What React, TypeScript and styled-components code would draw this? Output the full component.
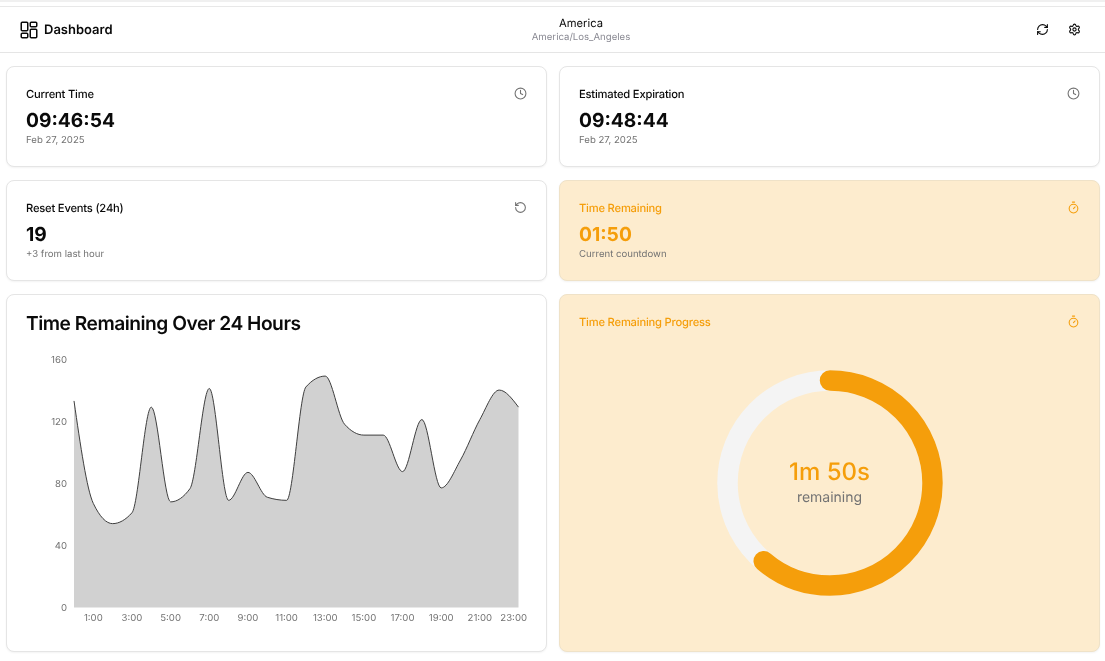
import React from "react";
import styled, { createGlobalStyle } from "styled-components";
import { Clock, RefreshCw, Settings, RotateCcw, Timer } from "lucide-react";

const Global = createGlobalStyle`
  html, body { margin: 0; padding: 0; background: #fff; }
  body {
    font-family: Inter, "Liberation Sans", sans-serif;
    color: #0a0a0a;
    text-rendering: geometricPrecision;
  }
  * { box-sizing: border-box; }
`;

const Page = styled.div`
  width: 1105px;
  height: 661px;
  overflow: hidden;
  background: #fff;
  border-top: 2px solid #f0f0f0;
  padding-top: 4px;
  will-change: transform;
`;

const Header = styled.header`
  height: 47px;
  border-top: 1px solid #e8e8e8;
  border-bottom: 1px solid #e5e5e5;
  display: grid;
  grid-template-columns: 511px 100px 1fr;
  align-items: center;
  padding: 0 20px;
`;

const Brand = styled.div`
  display: flex;
  align-items: center;
  gap: 6px;
`;

const BrandName = styled.span`
  font-size: 13px;
  font-weight: 600;
  margin-top: 1px;
`;

const Zone = styled.div`
  display: flex;
  flex-direction: column;
  align-items: center;
  white-space: nowrap;
`;

const ZoneName = styled.div`
  font-size: 11.2px;
  line-height: 15px;
`;

const ZoneId = styled.div`
  font-size: 9.6px;
  line-height: 13px;
  color: #8a8a93;
`;

const Actions = styled.div`
  display: flex;
  justify-content: flex-end;
  gap: 19px;
  padding-right: 4px;
  color: #0a0a0a;
`;

const Content = styled.main`
  display: grid;
  grid-template-columns: 541px 541px;
  grid-template-rows: 101px 101px 358px;
  gap: 13px 12px;
  padding: 13px 5px 0 6px;
`;

const Card = styled.section<{ $warn?: boolean }>`
  position: relative;
  border-radius: 8px;
  border: 1px solid ${p => (p.$warn ? "#efe2c8" : "#e5e5e5")};
  background: ${p => (p.$warn ? "#fdecce" : "#fff")};
  box-shadow: 0 1px 2px rgba(0, 0, 0, 0.05);
  color: ${p => (p.$warn ? "#f59e0b" : "#0a0a0a")};
  padding: 19px 19px 0;
  display: flex;
  flex-direction: column;
`;

const CardTop = styled.div`
  display: flex;
  align-items: flex-start;
  justify-content: space-between;
  height: 16px;
`;

const Label = styled.div`
  font-size: 11.2px;
  font-weight: 500;
  line-height: 16px;
  letter-spacing: -0.2px;
`;

const Side = styled.span<{ $warn?: boolean }>`
  display: flex;
  color: ${p => (p.$warn ? "#f59e0b" : "#737373")};
  margin-top: 1px;
`;

const Value = styled.div`
  font-size: 19.2px;
  font-weight: 700;
  line-height: 26px;
  margin-top: 5px;
`;

const Hint = styled.div`
  font-size: 9.6px;
  line-height: 14px;
  color: #737373;
  margin-top: 1px;
`;

const ChartCard = styled(Card)`
  padding: 16px 19px 0;
`;

const ChartTitle = styled.h2`
  margin: 0;
  font-size: 19.2px;
  font-weight: 600;
  line-height: 24px;
  letter-spacing: -0.48px;
`;

const RingWrap = styled.div`
  align-self: center;
  margin-top: 40px;
  position: relative;
  width: 226px;
  height: 226px;
`;

const RingText = styled.div`
  position: absolute;
  inset: 0;
  display: flex;
  flex-direction: column;
  align-items: center;
  justify-content: center;
`;

const RingValue = styled.div`
  font-size: 24px;
  font-weight: 500;
  line-height: 28px;
  color: #f59e0b;
  margin: -1px 0 2px;
`;

const RingLabel = styled.div`
  font-size: 14px;
  line-height: 20px;
  color: #737373;
`;

const ChartSvg = styled.svg`
  display: block;
  margin: 2px 0 0 -19px;
  flex: none;
`;

const AxisText = styled.text`
  font-family: Inter, "Liberation Sans", sans-serif;
  font-size: 9.6px;
  fill: #737373;
`;

const values = [133, 67, 54, 61, 129, 68, 76.5, 141, 69, 87, 71, 69, 142, 149, 118, 111, 111, 87.5, 121, 77, 95, 121, 140, 129];

const X0 = 67;
const X1 = 511.5;
const YT = 22;
const YB = 270.5;
const px = (i: number) => X0 + (i * (X1 - X0)) / 23;
const py = (v: number) => YB - (v * (YB - YT)) / 160;

function monotonePath(pts: [number, number][]) {
  const n = pts.length;
  const sign = (x: number) => (x < 0 ? -1 : 1);
  const d: number[] = [];
  const s: number[] = [];
  for (let i = 0; i < n - 1; i++) s.push((pts[i + 1][1] - pts[i][1]) / (pts[i + 1][0] - pts[i][0]));
  for (let i = 1; i < n - 1; i++) {
    const h0 = pts[i][0] - pts[i - 1][0];
    const h1 = pts[i + 1][0] - pts[i][0];
    const p = (s[i - 1] * h1 + s[i] * h0) / (h0 + h1);
    d[i] = (sign(s[i - 1]) + sign(s[i])) * Math.min(Math.abs(s[i - 1]), Math.abs(s[i]), 0.5 * Math.abs(p)) || 0;
  }
  d[0] = (3 * s[0] - d[1]) / 2;
  d[n - 1] = (3 * s[n - 2] - d[n - 2]) / 2;
  let out = `M${pts[0][0]},${pts[0][1]}`;
  for (let i = 0; i < n - 1; i++) {
    const h = (pts[i + 1][0] - pts[i][0]) / 3;
    out += `C${pts[i][0] + h},${pts[i][1] + h * d[i]},${pts[i + 1][0] - h},${pts[i + 1][1] - h * d[i + 1]},${pts[i + 1][0]},${pts[i + 1][1]}`;
  }
  return out;
}

const line = monotonePath(values.map((v, i) => [px(i), py(v)] as [number, number]));
const xTicks: [string, number][] = [
  ["1:00", 1], ["3:00", 3], ["5:00", 5], ["7:00", 7], ["9:00", 9], ["11:00", 11],
  ["13:00", 13], ["15:00", 15], ["17:00", 17], ["19:00", 19], ["21:00", 21],
];

function AreaChart() {
  return (
    <ChartSvg width={539} height={292} viewBox="0 0 539 292">
      {[0, 40, 80, 120, 160].map(t => (
        <AxisText key={t} x={60} y={py(t) + 3.5} textAnchor="end">{t}</AxisText>
      ))}
      <path d={`${line}L${X1},${YB}L${X0},${YB}Z`} fill="#d1d1d1" />
      <path d={line} fill="none" stroke="#3f3f3f" strokeWidth={1} />
      {xTicks.map(([l, i]) => (
        <AxisText key={l} x={px(i)} y={YB + 13.5} textAnchor="middle">{l}</AxisText>
      ))}
      <AxisText x={520} y={YB + 13.5} textAnchor="end">23:00</AxisText>
    </ChartSvg>
  );
}

function Ring() {
  const r = 102.5;
  const c = 2 * Math.PI * r;
  const frac = 110 / 180;
  return (
    <>
      <svg width={226} height={226} viewBox="0 0 226 226">
        <circle cx={113} cy={113} r={r} fill="none" stroke="#f4f4f4" strokeWidth={20.5} />
        <circle
          cx={113}
          cy={113}
          r={r}
          fill="none"
          stroke="#f59e0b"
          strokeWidth={20.5}
          strokeLinecap="round"
          strokeDasharray={`${c * frac} ${c}`}
          transform="rotate(-90 113 113)"
        />
      </svg>
      <RingText>
        <RingValue>1m 50s</RingValue>
        <RingLabel>remaining</RingLabel>
      </RingText>
    </>
  );
}

function DashIcon() {
  return (
    <svg width="18" height="18" viewBox="0 0 18 18" fill="none" stroke="#0a0a0a" strokeWidth="1.5" strokeLinejoin="round">
      <rect x="1.25" y="1.25" width="6.5" height="8.5" rx="1" />
      <rect x="10.25" y="1.25" width="6.5" height="4.5" rx="1" />
      <rect x="10.25" y="8.25" width="6.5" height="8.5" rx="1" />
      <rect x="1.25" y="12.25" width="6.5" height="4.5" rx="1" />
    </svg>
  );
}

function Stat(p: { label: string; value: string; hint: string; icon: React.ReactNode; warn?: boolean }) {
  return (
    <Card $warn={p.warn}>
      <CardTop>
        <Label>{p.label}</Label>
        <Side $warn={p.warn}>{p.icon}</Side>
      </CardTop>
      <Value>{p.value}</Value>
      <Hint>{p.hint}</Hint>
    </Card>
  );
}

export default function App() {
  return (
    <Page>
      <Global />
      <Header>
        <Brand><DashIcon /><BrandName>Dashboard</BrandName></Brand>
        <Zone>
          <ZoneName>America</ZoneName>
          <ZoneId>America/Los_Angeles</ZoneId>
        </Zone>
        <Actions>
          <RefreshCw size={13} strokeWidth={2} />
          <Settings size={13} strokeWidth={2} />
        </Actions>
      </Header>
      <Content>
        <Stat label="Current Time" value="09:46:54" hint="Feb 27, 2025" icon={<Clock size={13} />} />
        <Stat label="Estimated Expiration" value="09:48:44" hint="Feb 27, 2025" icon={<Clock size={13} />} />
        <Stat label="Reset Events (24h)" value="19" hint="+3 from last hour" icon={<RotateCcw size={13} />} />
        <Stat warn label="Time Remaining" value="01:50" hint="Current countdown" icon={<Timer size={13} />} />
        <ChartCard>
          <ChartTitle>Time Remaining Over 24 Hours</ChartTitle>
          <AreaChart />
        </ChartCard>
        <Card $warn>
          <CardTop>
            <Label>Time Remaining Progress</Label>
            <Side $warn><Timer size={13} /></Side>
          </CardTop>
          <RingWrap>
            <Ring />
          </RingWrap>
        </Card>
      </Content>
    </Page>
  );
}
